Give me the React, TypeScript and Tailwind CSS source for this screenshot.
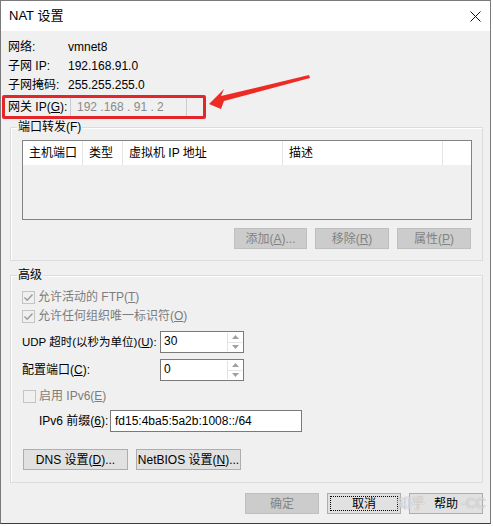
import React from 'react';
import clsx from 'clsx';

// Win32-style push button
const Btn = ({
  children,
  disabled,
  focus,
  className,
}: {
  children: React.ReactNode;
  disabled?: boolean;
  focus?: boolean;
  className?: string;
}) => (
  <div
    className={clsx(
      'relative flex h-[21px] items-center justify-center border text-[12px] leading-[16px]',
      disabled ? 'border-[#bfbfbf] bg-[#cccccc] text-[#838383]' : 'border-[#adadad] bg-[#e1e1e1] text-black',
      className,
    )}
  >
    {focus && <div className="absolute inset-[2px] border border-dotted border-black" />}
    <span className="relative whitespace-nowrap">{children}</span>
  </div>
);

const Check = ({ checked, label }: { checked?: boolean; label: React.ReactNode }) => (
  <div className="flex h-[16px] items-center">
    <div className="flex h-[13px] w-[13px] items-center justify-center border border-[#c4c4c4] bg-[#f0f0f0]">
      {checked && (
        <svg width="11" height="11" viewBox="0 0 11 11">
          <path d="M1.5 5.5 L4.2 8.2 L9.5 2.5" fill="none" stroke="#9a9a9a" strokeWidth="1.4" />
        </svg>
      )}
    </div>
    <span className="ml-[3px] whitespace-nowrap text-[#7d7d7d]">{label}</span>
  </div>
);

const Spin = ({ value }: { value: string }) => (
  <div className="flex h-[22px] w-[84px] border border-[#7a7a7a] bg-white">
    <div className="flex-1 pl-[3px] leading-[18px]">{value}</div>
    <div className="my-[1px] mr-[1px] flex w-[15px] flex-col border-l border-[#e3e3e3]">
      <div className="flex flex-1 items-center justify-center border-b border-[#e3e3e3]">
        <svg width="7" height="4" viewBox="0 0 7 4">
          <path d="M0 4 L3.5 0 L7 4 Z" fill="#a0a0a0" />
        </svg>
      </div>
      <div className="flex flex-1 items-center justify-center">
        <svg width="7" height="4" viewBox="0 0 7 4">
          <path d="M0 0 L3.5 4 L7 0 Z" fill="#a0a0a0" />
        </svg>
      </div>
    </div>
  </div>
);

const Group = ({ title, className, children }: { title: string; className?: string; children: React.ReactNode }) => (
  <div className={clsx('relative ml-[9px] w-[473px] border border-[#dcdcdc] shadow-[inset_1px_1px_0_#ffffff]', className)}>
    <div className="absolute left-[6px] top-[-9px] bg-[#f0f0f0] px-[1px] leading-[16px]">{title}</div>
    {children}
  </div>
);

export default function App() {
  return (
    <div
      className="relative h-[526px] w-[493px] bg-white text-[12px] leading-[16px] text-black"
      style={{ fontFamily: '"Liberation Sans", "Noto Sans CJK SC", sans-serif' }}
    >
      <div className="flex h-[524px] w-[491px] flex-col border border-[#7a7a7a] border-b-[#3c3c3c] bg-[#f0f0f0]">
        {/* Title bar */}
        <div className="flex h-[30px] items-center justify-between bg-white pl-[8px] pr-[9px]">
          <span className="text-[13px]">NAT 设置</span>
          <svg width="11" height="11" viewBox="0 0 11 11">
            <path d="M0.5 0.5 L10.5 10.5 M10.5 0.5 L0.5 10.5" stroke="#111" strokeWidth="1" />
          </svg>
        </div>

        {/* Network info */}
        <div className="flex flex-col gap-[1px] pl-[7px] pt-[7px]">
          <div className="flex h-[18px] items-center">
            <span className="w-[60px]">网络:</span>
            <span>vmnet8</span>
          </div>
          <div className="flex h-[18px] items-center">
            <span className="w-[60px]">子网 IP:</span>
            <span>192.168.91.0</span>
          </div>
          <div className="flex h-[18px] items-center">
            <span className="w-[60px]">子网掩码:</span>
            <span>255.255.255.0</span>
          </div>
        </div>
        <div className="mt-[2px] flex h-[21px] items-center pl-[7px]">
          <span className="w-[62px] whitespace-nowrap">
            网关 IP(<u>G</u>):
          </span>
          <div className="flex h-[21px] w-[117px] items-center border border-[#cccccc] bg-[#f0f0f0] pl-[6px] text-[#8a8a8a]">
            192 .168 . 91 . 2
          </div>
        </div>

        {/* Port forwarding */}
        <Group title="端口转发(F)" className="mt-[10px] h-[134px]">
          <div className="ml-[11px] mt-[12px] flex h-[80px] w-[450px] flex-col border border-[#828282] bg-[#f0f0f0]">
            <div className="flex h-[24px] bg-white">
              <div className="flex w-[60px] items-center border-r border-[#e5e5e5] pl-[6px]">主机端口</div>
              <div className="flex w-[40px] items-center border-r border-[#e5e5e5] pl-[6px]">类型</div>
              <div className="flex w-[160px] items-center border-r border-[#e5e5e5] pl-[6px]">虚拟机 IP 地址</div>
              <div className="flex w-[160px] items-center border-r border-[#e5e5e5] pl-[6px]">描述</div>
              <div className="flex-1" />
            </div>
          </div>
          <div className="mr-[11px] mt-[8px] flex justify-end gap-[8px]">
            <Btn disabled className="w-[73px]">
              添加(<u>A</u>)...
            </Btn>
            <Btn disabled className="w-[74px]">
              移除(<u>R</u>)
            </Btn>
            <Btn disabled className="w-[74px]">
              属性(<u>P</u>)
            </Btn>
          </div>
        </Group>

        {/* Advanced */}
        <Group title="高级" className="mt-[14px] h-[208px]">
          <div className="flex flex-col pl-[11px] pt-[13px]">
            <Check checked label={<>允许活动的 FTP(<u>T</u>)</>} />
            <div className="mt-[3px]">
              <Check checked label={<>允许任何组织唯一标识符(<u>O</u>)</>} />
            </div>
            <div className="mt-[7px] flex items-center">
              <span className="w-[138px] whitespace-nowrap text-[11.5px]">
                UDP 超时(以秒为单位)(<u>U</u>):
              </span>
              <Spin value="30" />
            </div>
            <div className="mt-[6px] flex items-center">
              <span className="w-[138px] whitespace-nowrap">
                配置端口(<u>C</u>):
              </span>
              <Spin value="0" />
            </div>
            <div className="ml-[1px] mt-[7px]">
              <Check label={<>启用 IPv6(<u>E</u>)</>} />
            </div>
            <div className="mt-[6px] flex items-center pl-[17px]">
              <span className="w-[71px] whitespace-nowrap">
                IPv6 前缀(<u>6</u>):
              </span>
              <div className="flex h-[22px] w-[192px] items-center border border-[#7a7a7a] bg-white pl-[4px]">
                fd15:4ba5:5a2b:1008::/64
              </div>
            </div>
            <div className="ml-[1px] mt-[17px] flex gap-[8px]">
              <Btn className="w-[105px]">
                DNS 设置(<u>D</u>)...
              </Btn>
              <Btn className="w-[105px]">
                NetBIOS 设置(<u>N</u>)...
              </Btn>
            </div>
          </div>
        </Group>

        {/* Dialog buttons */}
        <div className="mr-[7px] mt-[10px] flex justify-end gap-[8px]">
          <Btn disabled className="w-[74px]">
            确定
          </Btn>
          <Btn focus className="w-[74px]">
            取消
          </Btn>
          <Btn className="w-[74px]">帮助</Btn>
        </div>
      </div>

      {/* Annotation overlay */}
      <div className="pointer-events-none absolute left-[2px] top-[95px] h-[24px] w-[204px] rounded-[2px] border-[3px] border-[#e3262a]" />
      <svg className="pointer-events-none absolute left-0 top-0" width="493" height="526" viewBox="0 0 493 526">
        <path d="M209 104 L224 89 L221 96 L309 75 L310 78 L224 101 L221 109 Z" fill="#ee2a24" />
      </svg>
      {/* watermark */}
      <div className="pointer-events-none absolute left-[397px] top-[494px] text-[14px] leading-[18px] text-white/70 [text-shadow:0_0_1px_#888]">
        知乎
      </div>
      <div className="pointer-events-none absolute left-[461px] top-[494px] text-[14px] leading-[18px] text-white/70 [text-shadow:0_0_1px_#888]">
        -CC
      </div>
    </div>
  );
}
